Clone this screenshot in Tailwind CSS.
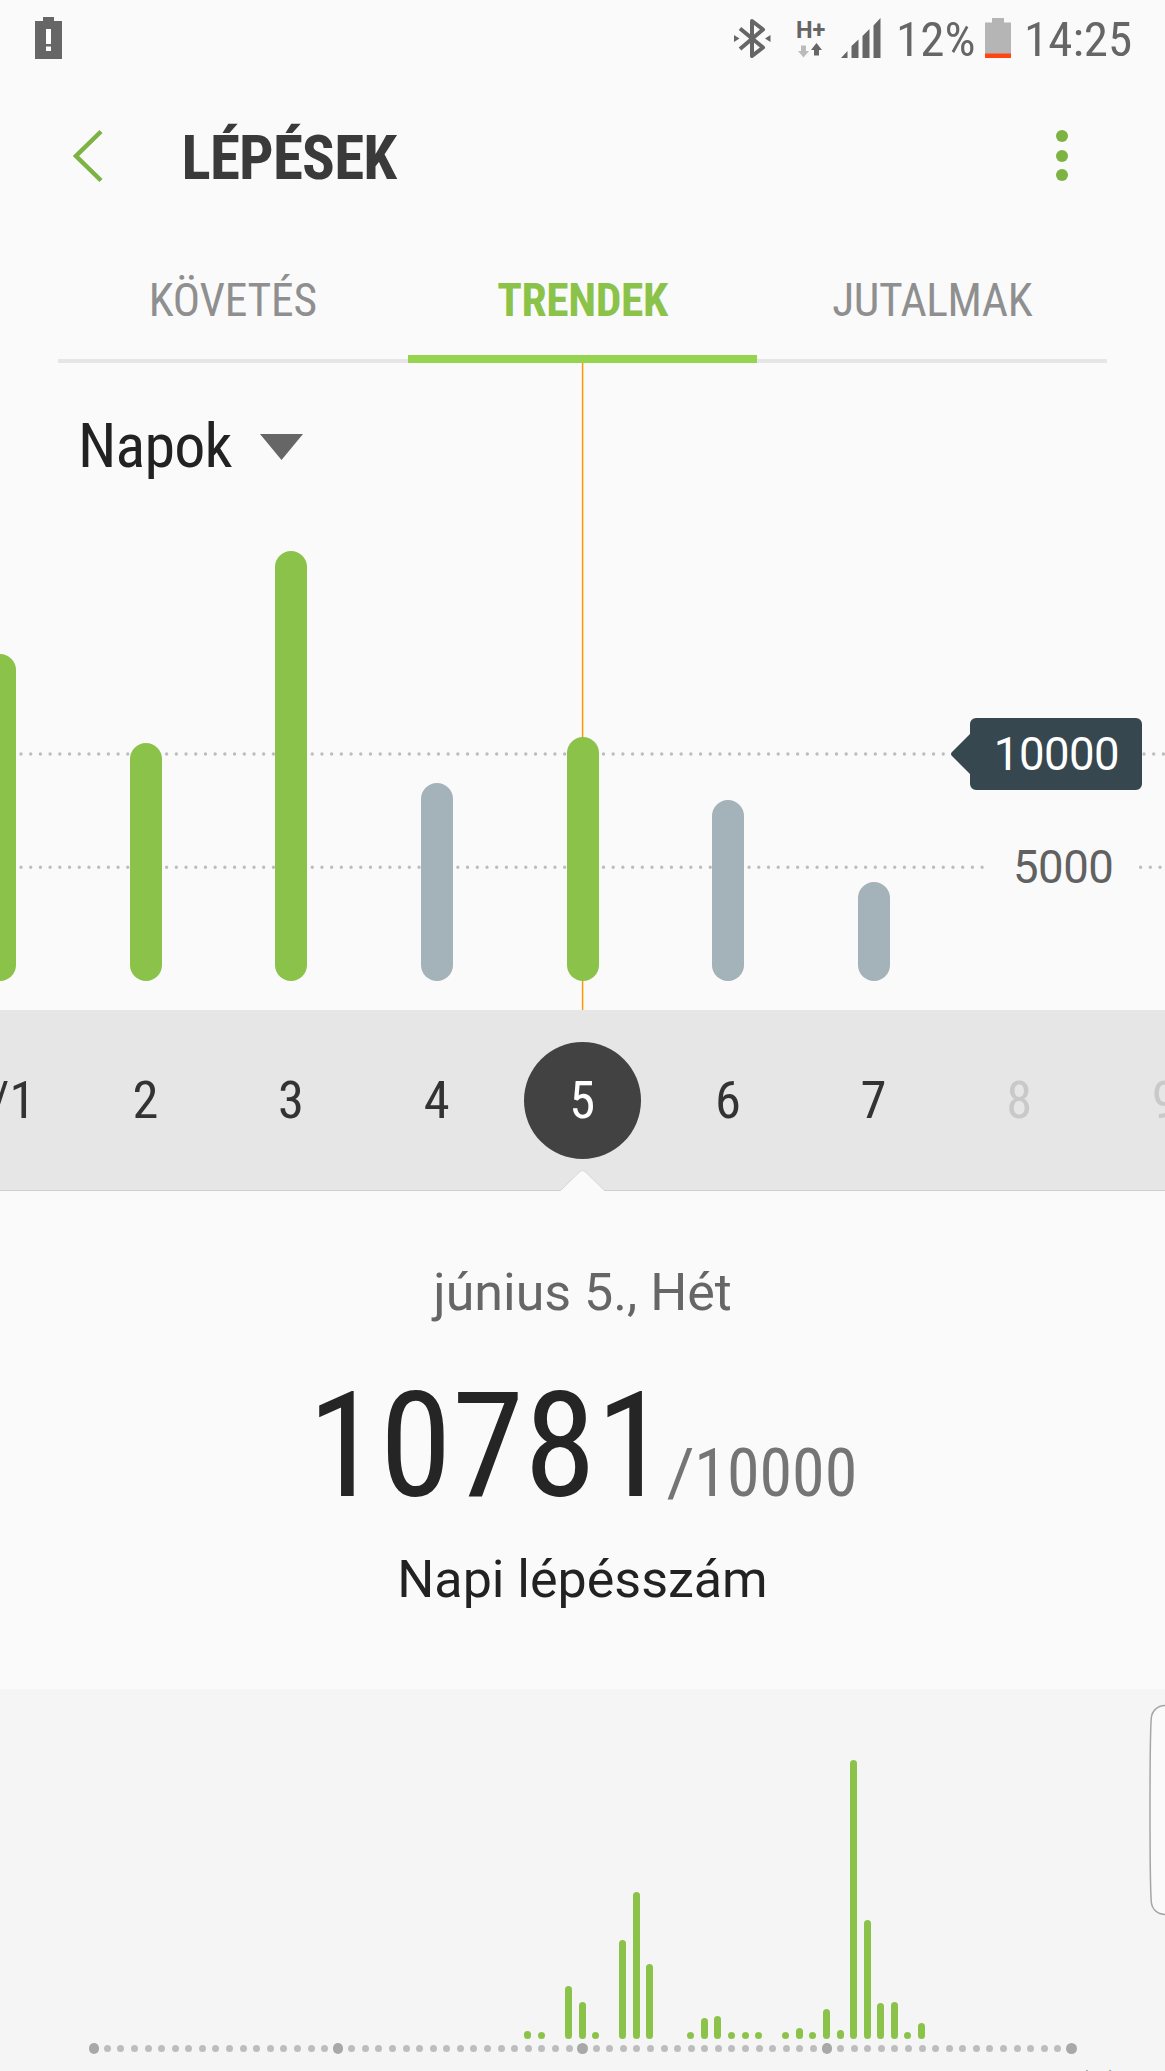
<!DOCTYPE html>
<html lang="hu">

<head>
    <meta charset="UTF-8" />
    <title>Lépések</title>
    <script src="https://cdn.jsdelivr.net/npm/@tailwindcss/browser@4"></script>
</head>

<body class="bg-[#fafafa] font-['Roboto_Condensed','Roboto',sans-serif] w-[1165px] h-[2071px] overflow-hidden flex flex-col">

    <!-- Status bar -->
    <div class="h-20 shrink-0 flex items-center text-[#666] pl-[35px] pr-[34px]">
        <svg class="w-[27px] h-[42px] -mt-1" viewBox="0 0 27 42">
            <path fill="#666" d="M0 4h8V0h11v4h8v38H0z" />
            <path fill="#fff" d="M11 12h5v15h-5zM11 29.500h5V34h-5z" />
        </svg>
        <div class="ml-auto flex items-center">
            <svg class="w-[37px] h-[41px] -mt-1" viewBox="0 0 37 41" fill="none" stroke="#666" stroke-width="4" stroke-linejoin="round">
                <path d="M6 10.500 29 29.500 18 38V3l11 8.500L6 31" />
                <path fill="#666" stroke="none" d="M0 17l5.500 3.500L0 24zM36.500 17 31 20.500l5.500 3.500z" />
            </svg>
            <div class="ml-[26px] w-7 h-10 -mt-1 flex flex-col justify-between">
                <span class="font-['Roboto',sans-serif] text-[23.500px] leading-[24px] font-bold -ml-px">H+</span>
                <svg class="w-7 h-[15px] shrink-0" viewBox="0 0 28 15">
                    <path fill="#bbb" d="M4 2.500h5V8h3l-5.500 6.500L1 8h3z" />
                    <path fill="#666" d="M17 12.500V7h-3l5.500-7L25 7h-3v5.500z" />
                </svg>
            </div>
            <svg class="ml-4 w-10 h-10 -mt-1" viewBox="0 0 40 40" fill="#666">
                <path d="M0 40l6.500-7v7zM10.500 40V28l7-6.500V40zM21.500 40V18l7-7v29zM32.500 40V7.500L39.500 0v40z" />
            </svg>
            <span class="ml-[15px] text-[49px] leading-none w-[80px] -mt-px">12%</span>
            <svg class="ml-[9px] w-[26px] h-10 -mt-1" viewBox="0 0 26 40">
                <path fill="#b5b5b5" d="M0 4.500h7V0h12v4.500h7V36H0z" />
                <path fill="#ff4612" d="M0 35.500h26V40H0z" />
            </svg>
            <span class="ml-[13px] text-[49px] leading-none w-[107px] -mt-px">14:25</span>
        </div>
    </div>

    <!-- Header -->
    <div class="h-[156px] shrink-0 flex items-center pl-[73px] pr-[97.500px]">
        <svg class="w-8 h-[54px] -mt-[5px]" viewBox="0 0 32 54" fill="none" stroke="#7cb342" stroke-width="4.500">
            <path d="M28 2.500 3 27 28 51.500" />
        </svg>
        <h1 class="ml-[76.500px] text-[61px] leading-none font-bold tracking-[-0.800px] text-[#3a3a3a]">LÉPÉSEK</h1>
        <div class="ml-auto -mt-[5px] flex flex-col gap-[7.500px]">
            <i class="size-3 rounded-full bg-[#7cb342]"></i>
            <i class="size-3 rounded-full bg-[#7cb342]"></i>
            <i class="size-3 rounded-full bg-[#7cb342]"></i>
        </div>
    </div>

    <!-- Tabs -->
    <div class="h-[127px] shrink-0 mx-[58px] grid grid-cols-3 text-[45.500px] tracking-[-0.400px] text-[#8f8f8f] border-b-[4px] border-[#e6e6e6]">
        <div class="flex items-center justify-center pt-2 tracking-[-0.200px]">KÖVETÉS</div>
        <div class="flex items-center justify-center pt-3 -mb-1 font-bold text-[#8bc34a] border-b-[8px] border-[#95d44f]">TRENDEK</div>
        <div class="flex items-center justify-center pt-2">JUTALMAK</div>
    </div>

    <!-- Daily trend chart -->
    <div class="relative h-[647px] shrink-0 flex flex-col overflow-hidden">
        <svg class="absolute inset-0 w-full h-full" viewBox="0 0 1165 647" fill="none" stroke="#bdbdbd" stroke-width="3.400" stroke-linecap="round" stroke-dasharray="0 9.708">
            <path stroke="#ff9800" stroke-width="1.500" stroke-dasharray="none" d="M582.600 0V647" />
            <path d="M21 391H955M1144 391H1165M21 504.300H985M1140.600 504.300H1165" />
        </svg>
        <div class="h-[166px] shrink-0 flex items-center pl-[78px]">
            <span class="text-[62px] leading-none tracking-[-0.800px] text-[#222]">Napok</span>
            <svg class="ml-[28.500px] mt-[2px] w-[43px] h-[26px]" viewBox="0 0 43 26">
                <path fill="#666" d="M0 0h43L21.500 26z" />
            </svg>
        </div>
        <div id="days" class="relative flex-1 flex items-end pb-[29px] w-[1310.625px] -ml-[72.800px]"></div>

        <!-- Goal marker -->
        <div class="absolute top-[355px] left-[951px] w-[191px] h-[72px]">
            <svg class="absolute inset-0" viewBox="0 0 191 72" fill="#37474f">
                <path d="M19 16V6a6 6 0 0 1 6-6h160a6 6 0 0 1 6 6v60a6 6 0 0 1-6 6H25a6 6 0 0 1-6-6V56L1 38q-2-2 0-4z" />
            </svg>
            <span class="absolute left-[20px] right-0 top-px h-[72px] flex items-center justify-center font-['Roboto',sans-serif] text-[45.500px] tracking-[-0.500px] text-white">10000</span>
        </div>
        <span class="absolute left-[1013px] top-[469px] h-[72px] flex items-center font-['Roboto',sans-serif] text-[45.500px] tracking-[-0.500px] text-[#616161]">5000</span>
    </div>

    <!-- Day selector -->
    <div class="relative h-[181px] shrink-0 bg-[#e6e6e6] border-b border-[#cfcfcf]">
        <div class="absolute left-[524px] top-[32px] size-[117px] rounded-full bg-[#424242]"></div>
        <svg class="absolute left-[560px] top-[159px] w-[45px] h-[23px]" viewBox="0 0 45 23">
            <path fill="#fafafa" stroke="#d6d6d6" d="M0 22 20 2.500q2.500-2.500 5 0L45 22" />
            <path fill="#fafafa" d="M1 21h43v2H1z" />
        </svg>
        <div class="relative h-[181px] flex items-center w-[1310.625px] -ml-[73px] text-[52.500px] text-[#333] text-center">
            <span class="flex-1">6/1</span>
            <span class="flex-1">2</span>
            <span class="flex-1">3</span>
            <span class="flex-1">4</span>
            <span class="flex-1 text-white">5</span>
            <span class="flex-1">6</span>
            <span class="flex-1">7</span>
            <span class="flex-1 text-[#c9c9c9]">8</span>
            <span class="flex-1 text-[#c9c9c9]">9</span>
        </div>
    </div>

    <!-- Selected day -->
    <div class="h-[498px] shrink-0 flex flex-col items-center">
        <div class="mt-[76px] font-['Roboto',sans-serif] text-[52px] leading-[52px] text-[#666]">június 5., Hét</div>
        <div class="mt-[55px] flex items-baseline leading-[146px]">
            <span class="text-[146px] text-[#252525]">10781</span>
            <span class="-ml-px text-[66px] text-[#757575]"><span class="font-['Roboto',sans-serif]">/</span>10000</span>
        </div>
        <div class="mt-[7px] font-['Roboto',sans-serif] text-[52px] leading-[52px] text-[#222]">Napi lépésszám</div>
    </div>

    <!-- Activity during the day -->
    <div class="relative flex-1 bg-[#f5f5f5] overflow-hidden">
        <div id="hours" class="flex items-end h-[350px] w-[991px] ml-[86.500px]"></div>
        <div id="dots" class="flex items-center h-[19px] w-[991px] ml-[87px]"></div>
        <span class="absolute left-[1077px] top-[380px] text-[38px] leading-none text-[#777]">(ó)</span>
        <svg class="absolute right-0 top-[15px] w-4 h-[212px]" viewBox="0 0 16 212">
            <path fill="#fafafa" stroke="#a6a6a6" stroke-width="1.500" d="M17 1.500C8 1.500 3 7 2.300 14Q1 30 1 106t1.300 92C3 205 8 210.500 17 210.500" />
        </svg>
    </div>

    <script>
        // Bar heights in px, one per day; green means the goal was reached
        const days = [
            [327, true], [238, true], [430, true], [198, false], [244.500, true],
            [181, false], [99, false], [0, false], [0, false]
        ];
        document.getElementById("days").innerHTML = days.map(([height, reached]) =>
            `<div class="flex-1 flex justify-center"><i class="w-[32px] rounded-full ${reached ? "bg-[#8bc34a]" : "bg-[#a4b2b9]"}" style="height:${height}px"></i></div>`
        ).join("");

        // 20 minute slots, 0:00 - 24:00
        const steps = {
            32: 8, 33: 7, 35: 53.500, 36: 37, 37: 7, 39: 99, 40: 147.500, 41: 75,
            44: 7, 45: 21, 46: 23, 47: 7, 48: 7, 49: 7, 51: 7, 52: 11, 53: 7,
            54: 30, 55: 9, 56: 279.500, 57: 119, 58: 36, 59: 37, 60: 7, 61: 16.500
        };
        let bars = "", dots = "";
        for (let i = 0; i <= 72; i++) {
            bars += `<div class="flex-1 flex justify-center"><i class="w-[7px] rounded-full bg-[#8bc34a]" style="height:${steps[i] || 0}px"></i></div>`;
            dots += `<div class="flex-1 flex justify-center"><i class="shrink-0 rounded-full ${i % 18 ? "size-[7px] bg-[#bdbdbd]" : "size-[10.500px] bg-[#a8a8a8]"}"></i></div>`;
        }
        document.getElementById("hours").innerHTML = bars;
        document.getElementById("dots").innerHTML = dots;
    </script>

</body>

</html>
